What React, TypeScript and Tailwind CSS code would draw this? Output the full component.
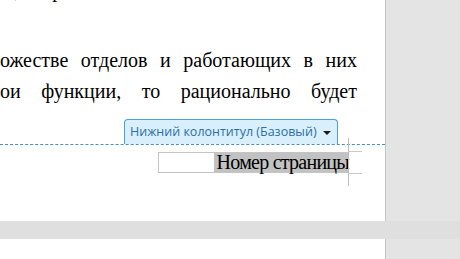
import React from 'react';

const SERIF = { fontFamily: '"Liberation Serif", "Times New Roman", serif' };
const SANS = { fontFamily: '"Open Sans", "Noto Sans", sans-serif' };

const LINE_2 = ['ожестве', 'отделов', 'и', 'работающих', 'в', 'них'];
const LINE_3 = ['ои', 'функции,', 'то', 'рационально', 'будет'];

const JustifiedLine: React.FC<{ words: string[] }> = ({ words }) => (
  <div className="flex h-[31px] w-[357px] justify-between whitespace-nowrap">
    {words.map((w, i) => (
      <span key={i}>{w}</span>
    ))}
  </div>
);

const Page: React.FC = () => (
  <div className="relative w-[385px] shrink-0 overflow-hidden bg-white">
    {/* Body text, previous line is clipped by the viewport */}
    <div className="text-[20px] leading-[31px] text-black" style={SERIF}>
      <div className="mt-[-25px] flex h-[31px] whitespace-nowrap">
        <span className="ml-[-9px]">ых,</span>
        <span className="ml-[22px]">при этом</span>
      </div>
      <div className="h-[39px]" />
      <JustifiedLine words={LINE_2} />
      <JustifiedLine words={LINE_3} />
    </div>

    {/* Footer tab */}
    <div className="mt-[12px] flex">
      <div
        className="ml-[124px] flex h-[25px] w-[214px] items-center rounded-t-[4px] border border-b-0 border-[#4aa2dc] bg-[#d9effc] pl-[5px] pr-[6px] text-[12.5px] text-[#2a70a6]"
        style={SANS}
      >
        <span className="whitespace-nowrap">Нижний колонтитул (Базовый)</span>
        <span className="ml-auto mt-[1px] h-0 w-0 border-x-[4px] border-t-[4px] border-x-transparent border-t-[#1a1a1a]" />
      </div>
    </div>
    <div className="h-0 border-t border-dashed border-[#4b91c0]" />

    {/* Page number field */}
    <div className="mt-[7px] flex">
      <div className="ml-[158px] flex h-[21px] w-[191px] justify-end border border-r-0 border-[#c4c4c4]">
        <span
          className="bg-[#c2c2c2] pl-[3px] text-[20px] leading-[19px] tracking-[-0.75px] text-black whitespace-nowrap"
          style={SERIF}
        >
          Номер страницы
        </span>
      </div>
    </div>

    {/* Text boundary marks */}
    <div className="absolute left-[348px] top-[138px] h-[48px] w-px bg-[#bdbdbd]" />
    <div className="absolute left-[348px] top-[151px] h-px w-[14px] bg-[#c8c8c8]" />
    <div className="absolute left-[348px] top-[173px] h-px w-[14px] bg-[#c8c8c8]" />
  </div>
);

export default function App() {
  return (
    <div className="flex h-[259px] w-[460px] flex-col overflow-hidden bg-[#e4e4e4]">
      <div className="flex h-[221px]">
        <Page />
        <div className="w-px bg-[#c3c3c3]" />
      </div>
      <div className="h-[18px] bg-[#dfdfdf]" />
      <div className="flex flex-1">
        <div className="w-[385px] bg-white" />
        <div className="w-px bg-[#c3c3c3]" />
      </div>
    </div>
  );
}
